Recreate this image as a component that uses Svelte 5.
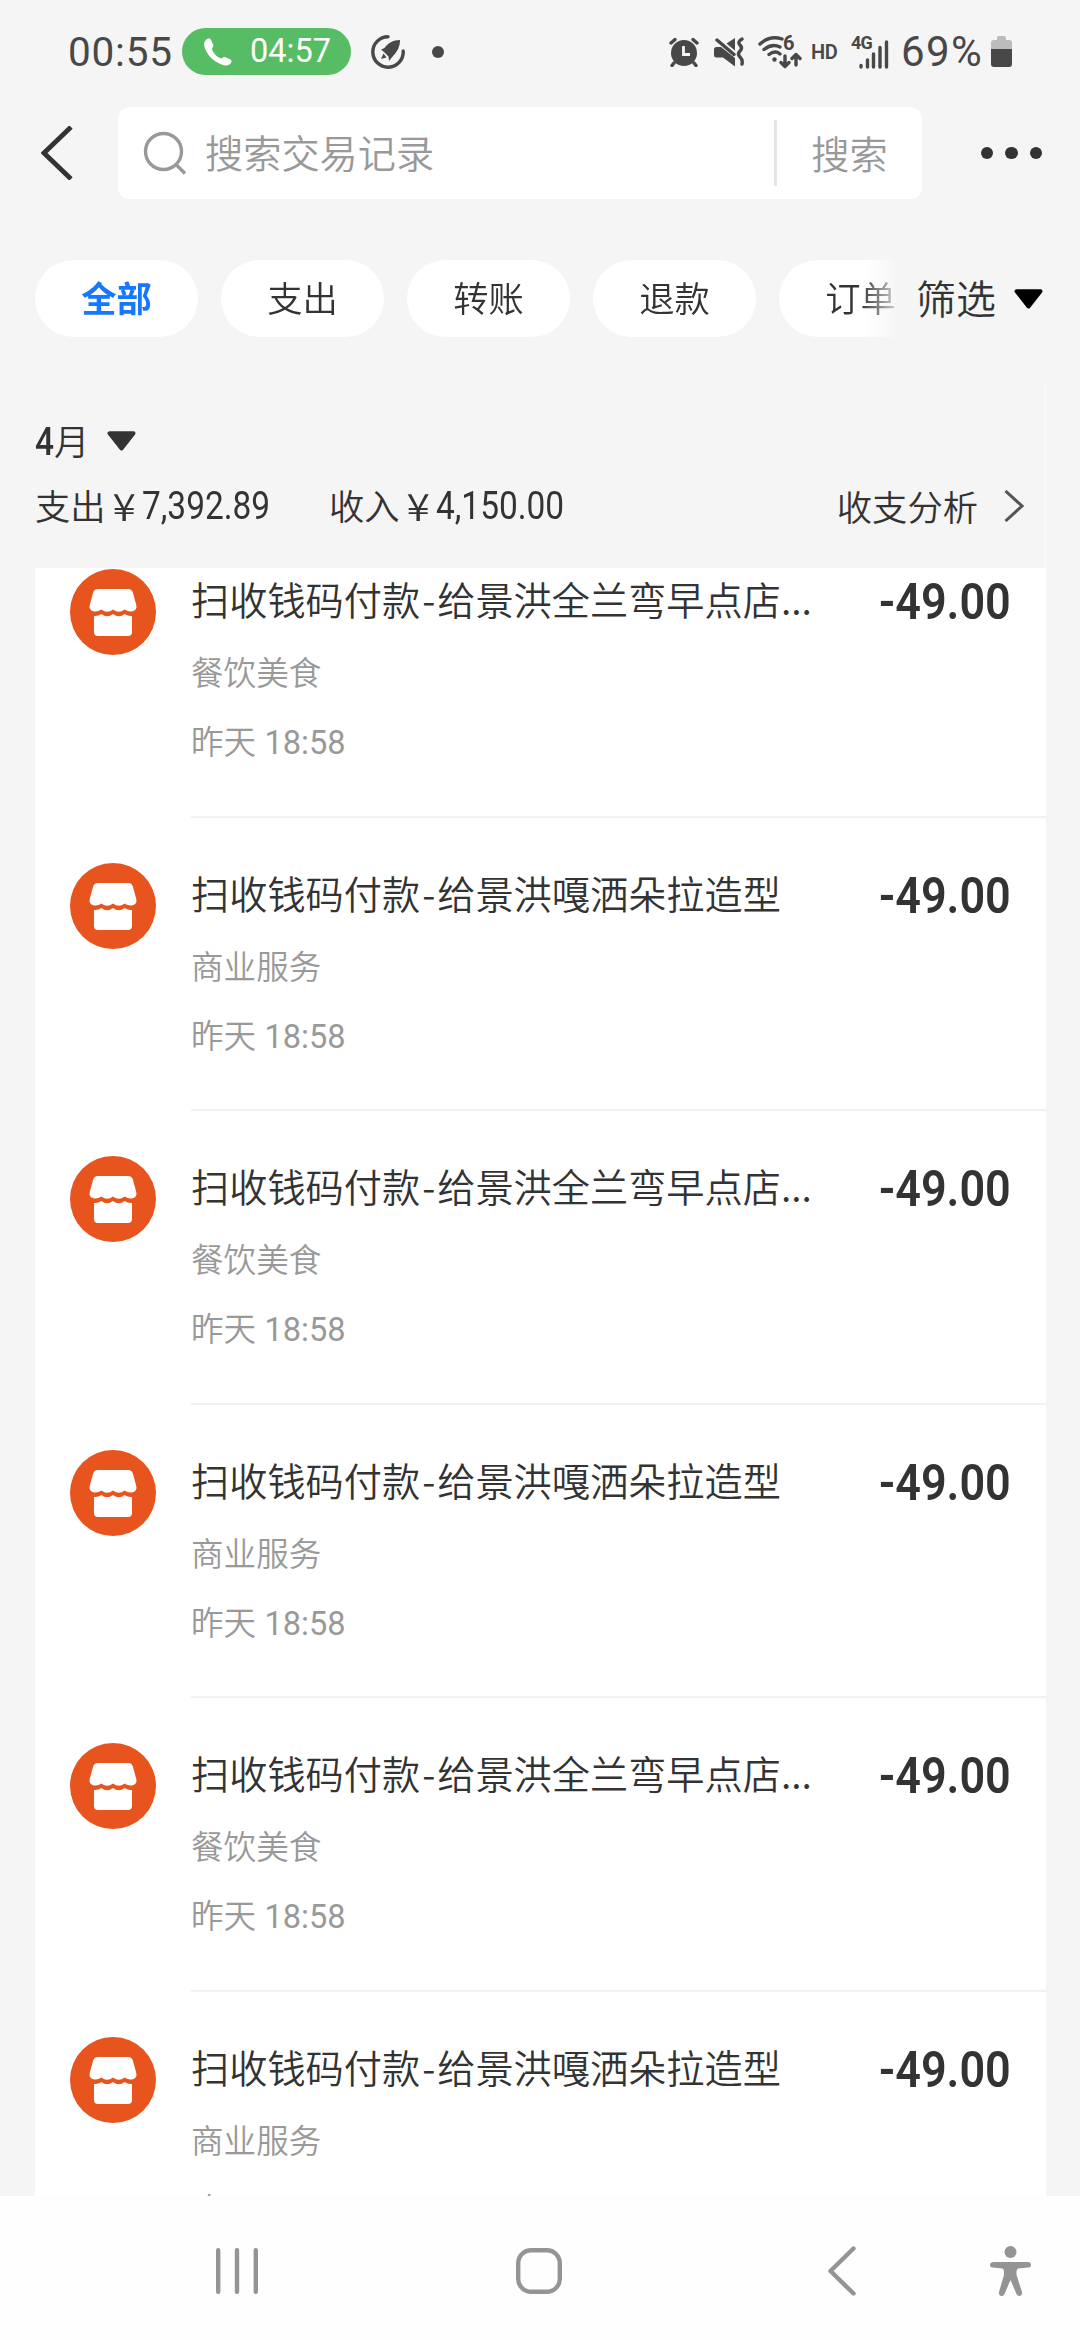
<script lang="ts">
  interface Transaction {
    kind: string;
    payee: string;
    category: string;
    time: string;
    amount: string;
  }

  const filters = ["全部", "支出", "转账", "退款", "订单"];
  let activeFilter = $state("全部");
  let query = $state("");

  const food = {
    kind: "扫收钱码付款",
    payee: "给景洪全兰弯早点店...",
    category: "餐饮美食",
    time: "18:58",
    amount: "-49.00",
  };
  const service = {
    kind: "扫收钱码付款",
    payee: "给景洪嘎洒朵拉造型",
    category: "商业服务",
    time: "18:58",
    amount: "-49.00",
  };
  const transactions: Transaction[] = [food, service, food, service, food, service];
</script>

<div class="screen">
  <div class="status">
    <span class="clock">00:55</span>
    <span class="call">
      <svg class="phone" viewBox="0 0 28 28">
        <path
          d="M1.500 2.500C3.500 0 6 0 7 2L9.200 6.500C10 8.500 8 9.500 8 11C9 15 13 19 17 20.500C18.500 20.500 19 18.500 21 19L26 21.200C28 22.200 28.200 24 26 26C23.500 28 20.500 27.800 17.500 26.500C9 23 3 17 0.500 9C-0.300 6 0 4.300 1.500 2.500Z"
        />
      </svg>
      <span class="call-time">04:57</span>
    </span>
    <svg class="rocket" viewBox="0 0 34 34">
      <path class="ring" d="M17 1.800A15.200 15.200 0 1 0 32.200 16" />
      <path d="M29 5C22 5 17 8 13.500 13L10 14.500L13 17L17.500 21.500L18 26L22 21C26 17 29 12 29 5ZM12.500 18.500L10 24L15.500 22.500Z" />
    </svg>
    <span class="dot"></span>

    <div class="status-right">
      <svg class="alarm" viewBox="0 0 30 30">
        <circle cx="15" cy="16" r="13" />
        <path class="line" d="M2 6L6 2.500M28 6L24 2.500M5 26L3 28.500M25 26L27 28.500" />
        <path class="cut" d="M14.500 9V17.500H21" />
      </svg>
      <svg class="mute" viewBox="0 0 30 30">
        <path d="M0 12.500Q0 10 2.500 10H7L21 21V29.500L9 20.500H2.500Q0 20.500 0 18ZM12.500 6.500L21 1V13.500Z" />
        <path class="line" d="M3 3L20 17.500M28 2Q23 5 26 8T26 14T26 20T28 27" />
      </svg>
      <div class="wifi">
        <svg viewBox="0 0 44 34">
          <path
            class="line"
            d="M2 9Q12 0 24 4M6 14.500Q14 8 22 12M11 19.500Q17 15 22 19M27 21V31M23 27.500L27 31.500L31 27.500M38 30V20M34 23.500L38 19.500L42 23.500"
          />
          <circle cx="16.500" cy="24.500" r="2.200" />
        </svg>
        <span class="wifi-gen">6</span>
      </div>
      <span class="hd">HD</span>
      <div class="signal">
        <svg viewBox="0 0 30 30">
          <path class="line" d="M2 26.500V28M8.500 21V28M14.500 15V28M21 8.500V28M27.500 3V28" />
        </svg>
        <span class="network">4G</span>
      </div>
      <span class="percent">69%</span>
      <svg class="battery" viewBox="0 0 21 31">
        <path class="empty" d="M6 2Q6 0 8 0H13Q15 0 15 2V4H18Q21 4 21 7V14H0V7Q0 4 3 4H6Z" />
        <path d="M0 13H21V28Q21 31 18 31H3Q0 31 0 28Z" />
      </svg>
    </div>
  </div>

  <header class="header">
    <svg class="back" viewBox="0 0 32 54"><path d="M30 1L3 27L30 53" /></svg>
    <div class="search">
      <svg class="magnifier" viewBox="0 0 44 44">
        <circle cx="20.500" cy="20.500" r="18" />
        <path d="M32.500 33L42 42.500" />
      </svg>
      <input bind:value={query} type="text" placeholder="搜索交易记录" aria-label="搜索交易记录" />
      <button type="button" class="search-button">搜索</button>
    </div>
    <div class="more"><i></i><i></i><i></i></div>
  </header>

  <nav class="filters">
    <div class="chips">
      {#each filters as filter}
        <button
          type="button"
          class="chip"
          class:active={filter === activeFilter}
          onclick={() => (activeFilter = filter)}
        >
          {filter}
        </button>
      {/each}
    </div>
    <span class="filter-label">筛选</span>
    <svg class="caret black" viewBox="0 0 29 20"><path d="M2.500 2.200H26.500L14.500 17.500Z" /></svg>
  </nav>

  <section class="summary">
    <div class="month">
      <span><b>4</b>月</span>
      <svg class="caret" viewBox="0 0 29 20"><path d="M2.500 2.200H26.500L14.500 17.500Z" /></svg>
    </div>
    <div class="totals">
      <span class="total">支出<span class="yen">¥</span><span class="num">7,392.89</span></span>
      <span class="total">收入<span class="yen">¥</span><span class="num">4,150.00</span></span>
      <span class="analysis">收支分析</span>
      <svg class="next" viewBox="0 0 20 32"><path d="M1.500 1L18 16L1.500 31" /></svg>
    </div>
  </section>

  <main class="list">
    {#each transactions as item}
      <article class="row">
        <svg class="shop" viewBox="0 0 86 86">
          <circle cx="43" cy="43" r="43" />
          <path
            class="store"
            d="M28 20H58Q62 20 63 24L66 35Q68 41 62 42.500Q58 43 54.500 40.500Q49 45 43 40.500Q37 45 31.500 40.500Q28 43 24 42.500Q18 41 20 35L23 24Q24 20 28 20ZM24 47Q28 47.500 31.500 45Q37 49.500 43 45Q49 49.500 54.500 45Q58 47.500 62 47V63Q62 67 58 67H28Q24 67 24 63Z"
          />
        </svg>
        <div class="detail">
          <div class="top">
            <h3>{item.kind}<span class="dash">-</span>{item.payee}</h3>
            <span class="amount">{item.amount}</span>
          </div>
          <p class="category">{item.category}</p>
          <p class="time">昨天 <span>{item.time}</span></p>
        </div>
      </article>
    {/each}
  </main>

  <footer class="system-nav">
    <svg class="recents" viewBox="0 0 42 46"><path d="M2.200 2.200V43.800M21 2.200V43.800M39.800 2.200V43.800" /></svg>
    <svg class="home" viewBox="0 0 46 46"><rect x="2.200" y="2.200" width="41.600" height="41.600" rx="13" /></svg>
    <svg class="nav-back" viewBox="0 0 28 50"><path d="M25.500 2.500L2.500 25L25.500 47.500" /></svg>
    <svg class="person" viewBox="0 0 42 52">
      <circle cx="20.500" cy="7" r="6" />
      <path
        d="M3 17H38Q41 17 41 20T38 22.500L28 23.500Q26.500 24 26.500 27V30L32 47Q32.500 50 30 51Q27.500 51.500 26.500 49L20.500 35L14.500 49Q13.500 51.500 11 51Q8.500 50 9 47L14 30V27Q14 24 12.500 23.500L3 22.500Q0 22.500 0 20T3 17Z"
      />
    </svg>
  </footer>
</div>

<style>
  :global(body) {
    margin: 0;
    background: #f5f5f5;
  }

  .screen {
    width: 1080px;
    height: 2340px;
    display: flex;
    flex-direction: column;
    overflow: hidden;
    background: #f5f5f5;
    color: #333;
    font-family: "Noto Sans CJK SC", sans-serif;
    font-size: 35.3px;
    font-weight: 350;
  }

  svg {
    display: block;
    flex: none;
  }

  button {
    appearance: none;
    border: 0;
    padding: 0;
    color: inherit;
    font: inherit;
    cursor: pointer;
  }

  .status {
    height: 107px;
    flex: none;
    box-sizing: border-box;
    padding: 0 68px 4px 68px;
    display: flex;
    align-items: center;
    color: #484848;
    fill: #484848;
    font-family: Roboto, sans-serif;
    font-weight: 400;
    white-space: nowrap;
  }

  .status .line {
    fill: none;
    stroke: #484848;
    stroke-width: 3.4;
    stroke-linecap: round;
    stroke-linejoin: round;
  }

  .clock {
    width: 114px;
    flex: none;
    font-size: 40.5px;
    letter-spacing: 0.8px;
  }

  .call {
    width: 169px;
    height: 47px;
    box-sizing: border-box;
    padding: 0 20px 0 22px;
    border-radius: 24px;
    display: flex;
    align-items: center;
    justify-content: space-between;
    flex: none;
    background: #56bd64;
    color: #fff;
    font-size: 32.5px;
  }

  .call-time {
    padding-bottom: 2px;
  }

  .phone {
    width: 28px;
    height: 28px;
    fill: #fff;
  }

  .rocket {
    width: 34px;
    height: 34px;
    margin-left: 20px;
  }

  .ring {
    fill: none;
    stroke: #484848;
    stroke-width: 3.4;
    stroke-linecap: round;
  }

  .dot {
    width: 12px;
    height: 12px;
    margin-left: 27px;
    border-radius: 50%;
    background: #484848;
  }

  .status-right {
    flex: 1;
    display: flex;
    align-items: center;
    justify-content: flex-end;
  }

  .alarm {
    width: 30px;
    height: 30px;
  }

  .alarm .cut {
    fill: none;
    stroke: #f5f5f5;
    stroke-width: 2.8;
  }

  .mute {
    width: 30px;
    height: 30px;
    margin-left: 15px;
  }

  .wifi {
    position: relative;
    width: 44px;
    height: 34px;
    margin-left: 14px;
  }

  .wifi-gen {
    position: absolute;
    left: 25px;
    top: -3px;
    font-size: 20px;
    line-height: 22px;
    font-weight: 700;
  }

  .hd {
    width: 27px;
    margin: 0 13px 0 9px;
    font-size: 20px;
    font-weight: 600;
    letter-spacing: -0.5px;
  }

  .signal {
    position: relative;
    width: 38px;
    height: 34px;
    display: flex;
    align-items: flex-end;
    justify-content: flex-end;
  }

  .signal svg {
    width: 30px;
    height: 30px;
  }

  .network {
    position: absolute;
    left: 0;
    top: -3px;
    font-size: 18px;
    line-height: 21px;
    font-weight: 700;
    letter-spacing: -0.8px;
  }

  .percent {
    width: 90px;
    padding-left: 12px;
    font-size: 42px;
    letter-spacing: 1.4px;
  }

  .battery {
    width: 21px;
    height: 31px;
  }

  .battery .empty {
    fill: #bcbcbc;
  }

  .header {
    height: 92px;
    flex: none;
    padding: 0 38px 0 41px;
    display: flex;
    align-items: center;
  }

  .back {
    width: 32px;
    height: 54px;
    margin-right: 45px;
    fill: none;
    stroke: #333;
    stroke-width: 4.8;
  }

  .search {
    width: 804px;
    height: 92px;
    box-sizing: border-box;
    padding-left: 25px;
    display: flex;
    align-items: center;
    border-radius: 12px;
    background: #fff;
    color: #999;
    font-size: 38.2px;
  }

  .magnifier {
    width: 44px;
    height: 44px;
    margin-right: 18px;
    fill: none;
    stroke: #999;
    stroke-width: 3.4;
  }

  input {
    flex: 1;
    min-width: 0;
    border: 0;
    padding: 0 0 3px;
    outline: 0;
    background: none;
    color: #333;
    font: inherit;
  }

  input::placeholder {
    color: #999;
    opacity: 1;
  }

  .search-button {
    width: 148px;
    height: 66px;
    border-left: 3px solid #e5e5e5;
    background: none;
    line-height: 60px;
  }

  .more {
    flex: 1;
    display: flex;
    justify-content: flex-end;
    gap: 12px;
  }

  .more i {
    width: 12.5px;
    height: 12.5px;
    border-radius: 50%;
    background: #333;
  }

  .filters {
    height: 77px;
    flex: none;
    margin-top: 61px;
    padding-left: 35px;
    display: flex;
    align-items: center;
  }

  .chips {
    width: 860px;
    flex: none;
    display: flex;
    gap: 23px;
    overflow: hidden;
    mask-image: linear-gradient(to right, #000 825px, transparent 870px);
  }

  .chip {
    width: 163px;
    height: 77px;
    flex: none;
    padding-bottom: 3px;
    border-radius: 39px;
    background: #fff;
    line-height: 74px;
  }

  .chip.active {
    color: #1677ff;
    font-weight: 700;
  }

  .filter-label {
    width: 80px;
    margin: 0 18px 0 21px;
    padding-bottom: 3px;
    font-size: 40px;
    white-space: nowrap;
  }

  .caret {
    width: 29px;
    height: 20px;
    fill: #333;
    stroke: #333;
    stroke-width: 4;
    stroke-linejoin: round;
  }

  .caret.black {
    fill: #000;
    stroke: #000;
  }

  .summary {
    height: 184px;
    flex: none;
    box-sizing: border-box;
    margin: 47px 34px 0 35px;
    padding-top: 32px;
    border-right: 2px solid #f9f9f9;
    white-space: nowrap;
  }

  .month {
    height: 50px;
    display: flex;
    align-items: center;
    gap: 18px;
    line-height: 48px;
  }

  b {
    display: inline-block;
    width: 19px;
    transform: scaleX(0.88);
    transform-origin: left;
    font-family: Roboto, sans-serif;
    font-size: 38px;
    font-weight: 500;
  }

  .totals {
    height: 50px;
    margin-top: 15px;
    display: flex;
    align-items: center;
    line-height: 50px;
  }

  .total {
    width: 294px;
    display: flex;
  }

  .yen {
    width: 36.5px;
    text-align: center;
    font-size: 38px;
    transform: scaleX(1.12);
  }

  .num {
    transform: scaleX(0.88);
    transform-origin: left;
    font-family: Roboto, sans-serif;
    font-size: 38px;
    font-weight: 400;
    line-height: 52px;
  }

  .analysis {
    margin-left: auto;
  }

  .next {
    width: 20px;
    height: 32px;
    margin: 0 20px 0 26px;
    fill: none;
    stroke: #555;
    stroke-width: 3;
  }

  .list {
    flex: 1;
    min-height: 0;
    margin: 0 34px 0 35px;
    display: flex;
    flex-direction: column;
    overflow: hidden;
    background: #fff;
  }

  .row {
    height: 293.6px;
    flex: none;
    box-sizing: border-box;
    padding: 45px 0 0 35px;
    display: flex;
    gap: 35px;
  }

  /* the list is scrolled so its first card meets the summary edge */
  .row:first-child {
    height: 249.6px;
    padding-top: 1px;
  }

  .shop {
    width: 86px;
    height: 86px;
    fill: #e8541e;
  }

  .store {
    fill: #fff;
  }

  .detail {
    flex: 1;
    min-width: 0;
    border-bottom: 2px solid #f2f2f2;
  }

  .top {
    height: 66px;
    padding-right: 35px;
    display: flex;
    align-items: center;
    justify-content: space-between;
  }

  h3 {
    margin: 0;
    padding-bottom: 6px;
    white-space: nowrap;
    font-size: 38.2px;
    font-weight: inherit;
    line-height: 60px;
  }

  .dash {
    padding: 0 2px;
  }

  .amount {
    transform: scaleX(0.9);
    transform-origin: right;
    font-family: Roboto, sans-serif;
    font-size: 50px;
    font-weight: 600;
    line-height: 60px;
  }

  p {
    margin: 0;
    color: #999;
    font-size: 32.6px;
    line-height: 48px;
  }

  .category {
    margin-top: 12px;
  }

  .time {
    margin-top: 21px;
  }

  .time span {
    padding-left: 1px;
    font-family: Roboto, sans-serif;
    font-weight: 400;
  }

  .system-nav {
    height: 144px;
    flex: none;
    box-sizing: border-box;
    padding: 6px 48px 0 216px;
    display: flex;
    align-items: center;
    background: #fefefe;
    fill: none;
    stroke: #949494;
    stroke-width: 4.4;
    stroke-linecap: round;
    stroke-linejoin: round;
  }

  .recents {
    width: 42px;
    height: 46px;
  }

  .home {
    width: 46px;
    height: 46px;
    margin-left: 258px;
  }

  .nav-back {
    width: 28px;
    height: 50px;
    margin-left: 266px;
  }

  .person {
    width: 42px;
    height: 52px;
    margin-left: auto;
    fill: #949494;
    stroke: none;
  }
</style>
